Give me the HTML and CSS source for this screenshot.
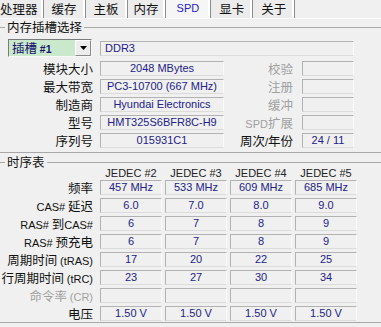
FILE: index.html
```html
<!DOCTYPE html>
<html lang="zh-CN">
<head>
    <meta charset="UTF-8">
    <meta name="viewport" content="width=device-width, initial-scale=1.0">
    <title>CPU-Z SPD</title>
    <link rel="stylesheet" href="styles.css">
</head>
<body>
    <nav class="tabs">
        <span class="tab first">处理器</span>
        <span class="tab">缓存</span>
        <span class="tab">主板</span>
        <span class="tab narrow">内存</span>
        <span class="tab active">SPD</span>
        <span class="tab">显卡</span>
        <span class="tab">关于</span>
    </nav>

    <fieldset class="group top">
        <legend>内存插槽选择</legend>
        <div class="info">
            <div class="slot">
                <span class="slot-text">插槽 <b class="lat">#1</b></span>
                <span class="drop">
                    <svg width="7" height="4" viewBox="0 0 7 4"><path d="M0 0h7L3.5 4z" fill="#000"/></svg>
                </span>
            </div>
            <div class="field wide">DDR3</div>

            <div class="lbl">模块大小</div>
            <div class="field">2048 MBytes</div>
            <div class="lbl r dim">校验</div>
            <div class="field"></div>

            <div class="lbl">最大带宽</div>
            <div class="field">PC3-10700 (667 MHz)</div>
            <div class="lbl r dim">注册</div>
            <div class="field"></div>

            <div class="lbl">制造商</div>
            <div class="field">Hyundai Electronics</div>
            <div class="lbl r dim">缓冲</div>
            <div class="field"></div>

            <div class="lbl">型号</div>
            <div class="field">HMT325S6BFR8C-H9</div>
            <div class="lbl r dim"><span class="lat">SPD</span>扩展</div>
            <div class="field"></div>

            <div class="lbl">序列号</div>
            <div class="field">015931C1</div>
            <div class="lbl r">周次<span class="lat">/</span>年份</div>
            <div class="field">24 / 11</div>
        </div>
    </fieldset>

    <fieldset class="group bottom">
        <legend>时序表</legend>
        <div class="timing">
            <div></div>
            <div class="hd">JEDEC #2</div>
            <div class="hd">JEDEC #3</div>
            <div class="hd">JEDEC #4</div>
            <div class="hd">JEDEC #5</div>

            <div class="lbl">频率</div>
            <div class="field">457 MHz</div>
            <div class="field">533 MHz</div>
            <div class="field">609 MHz</div>
            <div class="field">685 MHz</div>

            <div class="lbl"><span class="lat">CAS#</span> 延迟</div>
            <div class="field">6.0</div>
            <div class="field">7.0</div>
            <div class="field">8.0</div>
            <div class="field">9.0</div>

            <div class="lbl"><span class="lat">RAS#</span> 到<span class="lat">CAS#</span></div>
            <div class="field">6</div>
            <div class="field">7</div>
            <div class="field">8</div>
            <div class="field">9</div>

            <div class="lbl"><span class="lat">RAS#</span> 预充电</div>
            <div class="field">6</div>
            <div class="field">7</div>
            <div class="field">8</div>
            <div class="field">9</div>

            <div class="lbl">周期时间 <span class="lat">(tRAS)</span></div>
            <div class="field">17</div>
            <div class="field">20</div>
            <div class="field">22</div>
            <div class="field">25</div>

            <div class="lbl">行周期时间 <span class="lat">(tRC)</span></div>
            <div class="field">23</div>
            <div class="field">27</div>
            <div class="field">30</div>
            <div class="field">34</div>

            <div class="lbl dim">命令率 <span class="lat">(CR)</span></div>
            <div class="field"></div>
            <div class="field"></div>
            <div class="field"></div>
            <div class="field"></div>

            <div class="lbl">电压</div>
            <div class="field">1.50 V</div>
            <div class="field">1.50 V</div>
            <div class="field">1.50 V</div>
            <div class="field">1.50 V</div>
        </div>
    </fieldset>
</body>
</html>
```

FILE: styles.css
```css
body {
    margin: 0;
    width: 381px;
    height: 327px;
    overflow: hidden;
    background-color: #f0f0f0;
    color: #111;
    font-family: "Noto Sans CJK SC", sans-serif;
    font-size: 12.5px;
}
.lat {
    font-family: "Liberation Sans", Arial, sans-serif;
    font-size: 11px;
}
.tabs {
    display: flex;
    height: 18px;
    border-bottom: 1px solid #fafafa;
}
.tab {
    padding: 0 8px;
    height: 18px;
    line-height: 17px;
    border-right: 1px solid #8c8c8c;
    box-shadow: inset -2px 0 0 #fff;
    background-color: #ececec;
}
.tab.first {
    padding-left: 0;
    padding-right: 5px;
}
.tab.narrow {
    padding: 0 6px;
}
.tab.active {
    padding: 0 11px;
    color: #2323c8;
    font-family: "Liberation Sans", Arial, sans-serif;
    font-size: 11px;
    background-color: #f6f6f6;
}
.group {
    margin: 1px -10px 0 0;
    padding: 5px 0 0;
    border: 0;
    border-top: 1px solid #a8a8a8;
    border-bottom: 1px solid #a8a8a8;
    min-width: 0;
}
.group legend {
    margin-left: 5px;
    padding: 0 2px;
    line-height: 14px;
    font-size: 12.5px;
}
.group.bottom {
    margin-top: 2px;
    padding-top: 0;
}
.info {
    display: grid;
    grid-template-columns: 100px 124px 78px 52px;
    grid-template-rows: 22px repeat(4, 18px) 19px;
}
.timing {
    display: grid;
    grid-template-columns: 97px repeat(4, 62px);
    grid-template-rows: 11px repeat(7, 18px) 16px;
    column-gap: 3px;
}
.lbl {
    text-align: right;
    padding-right: 7px;
    height: 15px;
    line-height: 15px;
    white-space: nowrap;
}
.timing .lbl {
    padding-right: 4px;
}
.lbl.r {
    padding-right: 9px;
}
.dim {
    color: #a0a0a0;
}
.field {
    box-sizing: border-box;
    height: 15px;
    border: 1px solid;
    border-color: #b2b2b2 #fbfbfb #dcdcdc #b2b2b2;
    font-family: "Liberation Sans", Arial, sans-serif;
    font-size: 11px;
    line-height: 13px;
    color: #22228a;
    text-align: center;
    white-space: nowrap;
    overflow: hidden;
}
.field.wide {
    grid-column: 2 / span 3;
    text-align: left;
    padding-left: 4px;
    margin-top: 2px;
}
.hd {
    font-family: "Liberation Sans", Arial, sans-serif;
    font-size: 11px;
    line-height: 8px;
    text-align: center;
    color: #222;
}
.slot {
    display: flex;
    align-items: center;
    justify-content: space-between;
    box-sizing: border-box;
    height: 18px;
    margin: 0 8px 0 8px;
    border: 1px solid;
    border-color: #7a7a7a #f8f8f8 #f8f8f8 #7a7a7a;
    background-color: #c9e8cc;
}
.slot-text {
    padding-left: 3px;
    color: #14146a;
    line-height: 16px;
}
.slot-text b {
    font-size: 10.5px;
}
.drop {
    display: flex;
    align-items: center;
    justify-content: center;
    box-sizing: border-box;
    width: 16px;
    height: 16px;
    border: 1px solid;
    border-color: #fff #8a8a8a #8a8a8a #fff;
    background-color: #ededed;
}
```
